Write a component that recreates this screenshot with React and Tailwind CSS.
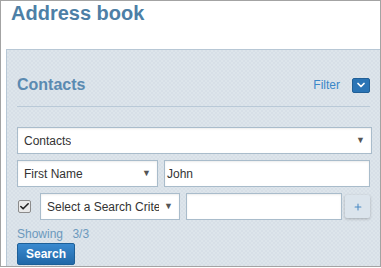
import { ChevronDown, Check, Plus } from "lucide-react";

const font = { fontFamily: '"Liberation Sans", Arial, sans-serif' };

function SelectBox({ label, className = "" }) {
  return (
    <div className={`relative flex items-center h-[27px] bg-white border border-[#a9bccb] shadow-[inset_0_1px_2px_rgba(0,0,0,0.08)] pl-[6px] pr-[20px] ${className}`}>
      <span className="text-[12px] text-[#333] whitespace-nowrap overflow-hidden min-w-0">{label}</span>
      <span className="absolute right-[6px] top-[8px] text-[9px] text-[#555] leading-none">▼</span>
    </div>
  );
}

export default function App() {
  return (
    <div style={font} className="w-[381px] h-[267px] border border-[#a3a3a3] bg-white flex flex-col overflow-hidden">
      <h1 className="text-[20px] font-bold text-[#4d7fa6] pl-[10px] leading-[24px]">Address book</h1>
      <div className="mt-[24px] ml-[5px] flex-1 border-t border-l border-[#b7c7d5] bg-[#dae2e9] bg-[conic-gradient(#d7dfe7_25%,#dde5eb_0_50%,#d7dfe7_0_75%,#dde5eb_0)] bg-[length:4px_4px] px-[10px]">
        <div className="flex items-end justify-between h-[57px] pb-[12px] border-b border-[#b9c9d7]">
          <span className="text-[16px] font-bold text-[#5a8ab1] leading-[18px]">Contacts</span>
          <div className="flex items-center gap-[12px] h-[18px]">
            <span className="text-[12px] text-[#3b87c8]">Filter</span>
            <span className="w-[18px] h-[15px] rounded-[2px] bg-[#2a74b5] border border-[#215f96] flex items-center justify-center">
              <ChevronDown size={12} strokeWidth={3.5} className="text-white" />
            </span>
          </div>
        </div>
        <div className="mt-[20px] flex flex-col gap-[6px]">
          <SelectBox label="Contacts" className="w-[355px]" />
          <div className="flex gap-[6px]">
            <SelectBox label="First Name" className="w-[141px]" />
            <div className="flex-1 h-[27px] bg-white border border-[#a9bccb] shadow-[inset_0_1px_2px_rgba(0,0,0,0.08)] flex items-center pl-[2px] text-[12px] text-[#333]">John</div>
          </div>
          <div className="flex items-center gap-[6px]">
            <span className="w-[13px] h-[13px] ml-[1px] mr-[3px] rounded-[2px] border border-[#8b8b8b] bg-[#e9e9e9] flex items-center justify-center">
              <Check size={11} strokeWidth={3.5} className="text-[#222]" />
            </span>
            <SelectBox label="Select a Search Crite" className="w-[140px]" />
            <div className="w-[159px] h-[27px] bg-white border border-[#a9bccb] shadow-[inset_0_1px_2px_rgba(0,0,0,0.08)]"></div>
            <span className="w-[25px] h-[23px] -ml-[3px] rounded-[2px] bg-[#dbe4ec] shadow-[0_1px_3px_rgba(0,0,0,0.25)] flex items-center justify-center">
              <Plus size={10} strokeWidth={2.5} className="text-[#4a8ac4]" />
            </span>
          </div>
        </div>
        <div className="mt-[7px] text-[12px] text-[#6c99bd] leading-[14px]">
          Showing <span className="ml-[6px]">3/3</span>
        </div>
        <button className="-mt-[1px] w-[58px] h-[22px] rounded-[2px] border border-[#1d5f97] bg-gradient-to-b from-[#3a8ad0] to-[#2168a8] text-white text-[12px] font-bold leading-none">
          Search
        </button>
      </div>
    </div>
  );
}
